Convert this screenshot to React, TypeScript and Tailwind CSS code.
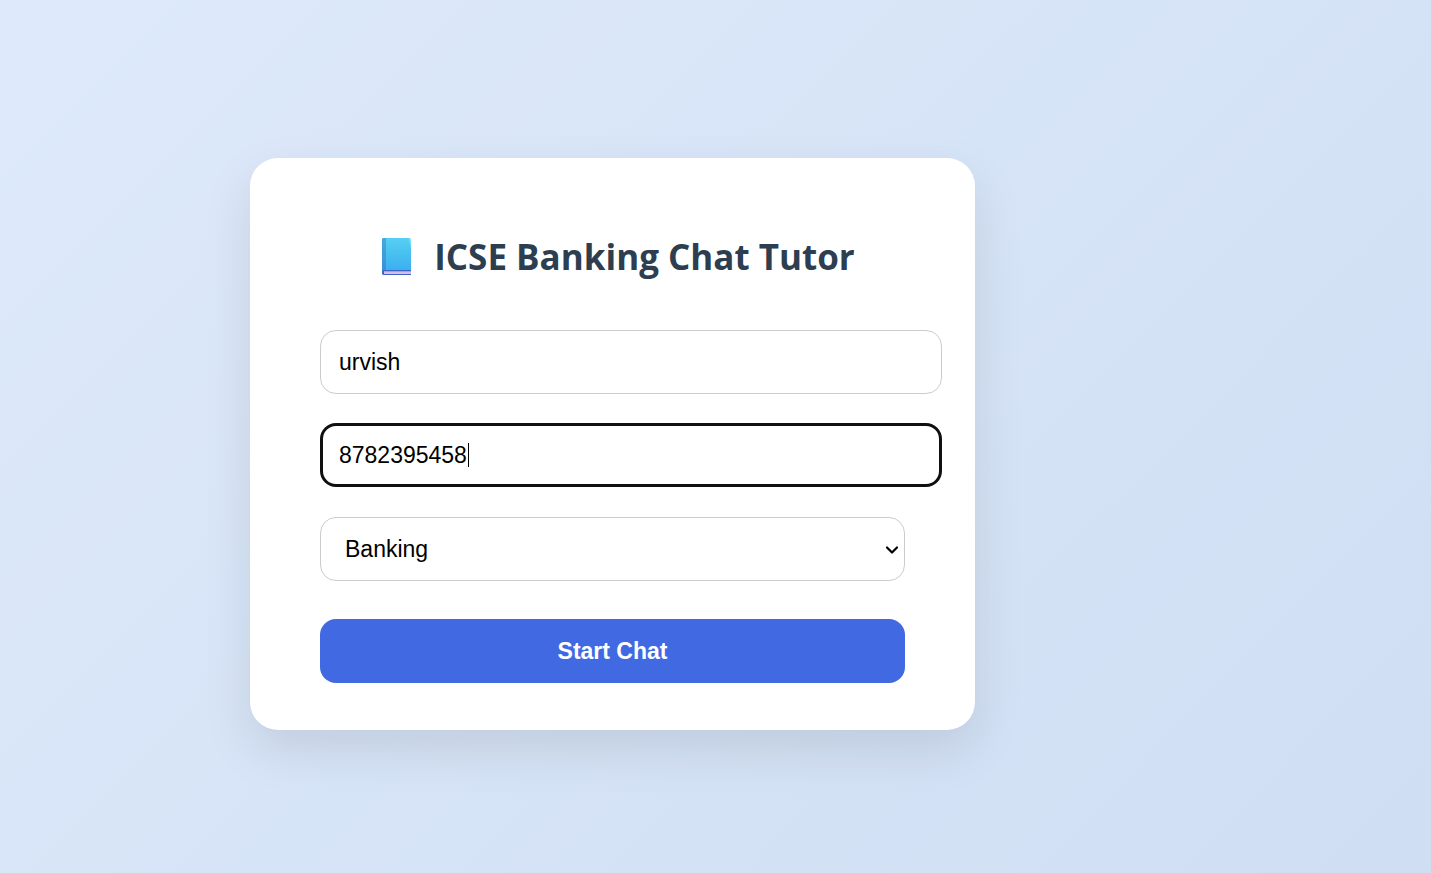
import { useEffect, useRef, useState } from "react";

function BookIcon() {
  return (
    <svg width="30" height="37" viewBox="0 0 30 37" aria-hidden="true" className="shrink-0">
      <defs>
        <linearGradient id="cover" x1="0" y1="0" x2="0" y2="1">
          <stop offset="0" stopColor="#55d0f2" />
          <stop offset="1" stopColor="#38aaf0" />
        </linearGradient>
        <linearGradient id="spine" x1="0" y1="0" x2="0" y2="1">
          <stop offset="0" stopColor="#47a8d8" />
          <stop offset="1" stopColor="#388fd6" />
        </linearGradient>
      </defs>
      <path d="M1.500 0H27l2 1v31H4L2 37 0 36V1.500Q0 0 1.500 0Z" fill="url(#cover)" />
      <path d="M1.500 0H4v32H2l-2 4V1.500Q0 0 1.500 0Z" fill="url(#spine)" />
      <path d="M27 .5 29 1v9Z" fill="#7be4f8" />
      <path d="M1.500 32H29v5H2Q0 37 0 35v-1Q0 32 1.500 32Z" fill="#3d66c4" />
      <path d="M2 33H29v3H2Z" fill="#d6bde8" />
      <path d="M2 33H29v1H2Z" fill="#b99bd2" />
    </svg>
  );
}

const field =
  "block h-16 rounded-2xl border border-[#cccccc] bg-white text-[23px] leading-7 text-black outline-none";

export default function App() {
  const [name, setName] = useState("urvish");
  const [phone, setPhone] = useState("8782395458");
  const [touched, setTouched] = useState(false);
  const phoneRef = useRef<HTMLInputElement>(null);

  useEffect(() => {
    const input = phoneRef.current;
    input?.focus();
    input?.setSelectionRange(input.value.length, input.value.length);
  }, []);

  return (
    <main className="flex min-h-screen items-center justify-center bg-linear-[135deg] from-[#deeafb] to-[#cfdef3] pt-[14px] pr-[206px] font-['Liberation_Sans',Arial,sans-serif]">
      <form
        onSubmit={(event) => event.preventDefault()}
        className="w-full max-w-[725px] rounded-[28px] bg-white px-[70px] pt-[73px] pb-[47px] shadow-[0_20px_50px_rgba(0,0,0,0.1)]"
      >
        <h1 className="flex items-center justify-center gap-[22px] pl-3 font-['Open_Sans','Segoe_UI',sans-serif] text-[35px] leading-[52px] font-bold text-[#2c3e50]">
          <BookIcon />
          ICSE Banking Chat Tutor
        </h1>

        <input
          aria-label="Name"
          type="text"
          value={name}
          onChange={(event) => setName(event.target.value)}
          className={`${field} mt-[47px] w-[calc(100%+37px)] px-[18px] pt-0.5`}
        />

        <div className="relative mt-[29px] w-[calc(100%+37px)]">
          <input
            ref={phoneRef}
            aria-label="Phone number"
            type="tel"
            value={phone}
            onKeyDown={() => setTouched(true)}
            onPointerDown={() => setTouched(true)}
            onBlur={() => setTouched(true)}
            onChange={(event) => setPhone(event.target.value)}
            className={`${field} w-full px-[18px] pt-0.5 focus:border-[3px] focus:border-[#101010] focus:px-4 ${touched ? "" : "caret-transparent"}`}
          />
          {!touched && <span className="absolute top-5 left-[148px] h-6 w-px bg-black" />}
        </div>

        <div className="relative mt-[30px]">
          <select
            aria-label="Subject"
            defaultValue="Banking"
            className={`${field} w-full appearance-none pr-10 pl-6`}
          >
            <option>Banking</option>
          </select>
          <svg
            width="14"
            height="10"
            viewBox="0 0 14 10"
            aria-hidden="true"
            className="pointer-events-none absolute top-7 right-[6px]"
          >
            <path d="M2 2.500 7 7.500l5-5" fill="none" stroke="#000" strokeWidth="2.200" strokeLinecap="round" strokeLinejoin="round" />
          </svg>
        </div>

        <button
          type="submit"
          className="mt-[38px] block h-16 w-full rounded-2xl bg-[#4169e1] text-[23px] leading-7 font-bold text-white"
        >
          Start Chat
        </button>
      </form>
    </main>
  );
}
